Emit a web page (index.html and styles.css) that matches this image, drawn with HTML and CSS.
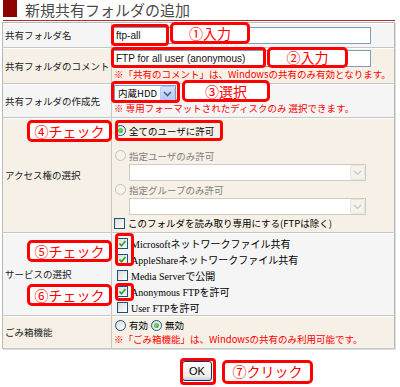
FILE: index.html
```html
<!DOCTYPE html>
<html lang="ja">
  <head>
    <meta charset="UTF-8" />
    <title>新規共有フォルダの追加</title>
    <link rel="stylesheet" href="styles.css">
  </head>
  <body>
    <div class="page">
      <!-- タイトル -->
      <div class="title">
        <span class="title-mark"></span>
        <h1>新規共有フォルダの追加</h1>
      </div>

      <table class="form">
        <tr class="row-name">
          <th>共有フォルダ名</th>
          <td><div class="text-box">ftp-all</div></td>
        </tr>
        <tr class="row-comment alt">
          <th>共有フォルダのコメント</th>
          <td>
            <div class="text-box">FTP for all user (anonymous)</div>
            <p class="note">※「共有のコメント」は、Windowsの共有のみ有効となります。</p>
          </td>
        </tr>
        <tr class="row-disk">
          <th>共有フォルダの作成先</th>
          <td>
            <div class="select small">
              <span class="select-text">内蔵HDD</span>
              <span class="drop"><svg viewBox="0 0 9 6" width="9" height="6"><path d="M1 1l3.5 3.5L8 1" fill="none" stroke="currentColor" stroke-width="1.6"/></svg></span>
            </div>
            <p class="note">※ 専用フォーマットされたディスクのみ 選択できます。</p>
          </td>
        </tr>
        <tr class="row-access alt">
          <th>アクセス権の選択</th>
          <td>
            <div class="opt first"><span class="radio on"></span>全てのユーザに許可</div>
            <div class="opt off"><span class="radio"></span>指定ユーザのみ許可</div>
            <div class="select wide off">
              <span class="select-text"></span>
              <span class="drop"><svg viewBox="0 0 9 6" width="9" height="6"><path d="M1 1l3.5 3.5L8 1" fill="none" stroke="currentColor" stroke-width="1.2"/></svg></span>
            </div>
            <div class="opt off"><span class="radio"></span>指定グループのみ許可</div>
            <div class="select wide off">
              <span class="select-text"></span>
              <span class="drop"><svg viewBox="0 0 9 6" width="9" height="6"><path d="M1 1l3.5 3.5L8 1" fill="none" stroke="currentColor" stroke-width="1.2"/></svg></span>
            </div>
            <div class="opt last"><span class="check"></span>このフォルダを読み取り専用にする(FTPは除く)</div>
          </td>
        </tr>
        <tr class="row-service">
          <th>サービスの選択</th>
          <td>
            <div class="svc"><span class="check"><svg viewBox="0 0 11 11" width="11" height="11"><path d="M2.5 5.5l2 2.2 4-4.7" fill="none" stroke="#21a121" stroke-width="1.6"/></svg></span>Microsoftネットワークファイル共有</div>
            <div class="svc"><span class="check"><svg viewBox="0 0 11 11" width="11" height="11"><path d="M2.5 5.5l2 2.2 4-4.7" fill="none" stroke="#21a121" stroke-width="1.6"/></svg></span>AppleShareネットワークファイル共有</div>
            <div class="svc"><span class="check"></span>Media Serverで公開</div>
            <div class="svc"><span class="check"><svg viewBox="0 0 11 11" width="11" height="11"><path d="M2.5 5.5l2 2.2 4-4.7" fill="none" stroke="#21a121" stroke-width="1.6"/></svg></span>Anonymous FTPを許可</div>
            <div class="svc"><span class="check"></span>User FTPを許可</div>
          </td>
        </tr>
        <tr class="row-trash alt">
          <th>ごみ箱機能</th>
          <td>
            <div class="opt trash"><span class="radio"></span>有効<span class="radio on"></span>無効</div>
            <p class="note">※「ごみ箱機能」は、Windowsの共有のみ利用可能です。</p>
          </td>
        </tr>
      </table>

      <div class="actions">
        <button class="ok">OK</button>
      </div>

      <!-- 操作説明の吹き出し -->
      <span class="mark mark-name"></span>
      <span class="mark mark-comment"></span>
      <span class="mark mark-disk"></span>
      <span class="mark mark-all"></span>
      <span class="mark mark-svc"></span>
      <span class="mark mark-ftp"></span>
      <span class="mark mark-ok"></span>

      <span class="tag tag-1">①入力</span>
      <span class="tag tag-2">②入力</span>
      <span class="tag tag-3">③選択</span>
      <span class="tag tag-4">④チェック</span>
      <span class="tag tag-5">⑤チェック</span>
      <span class="tag tag-6">⑥チェック</span>
      <span class="tag tag-7">⑦クリック</span>
    </div>
  </body>
</html>
```

FILE: styles.css
```css
body {
  margin: 0;
  background-color: #fff;
  font-family: "Noto Sans CJK JP", sans-serif;
  font-size: 9.5px;
  color: #222;
}

.page {
  position: relative;
  width: 400px;
  height: 387px;
  overflow: hidden;
}

.title {
  display: flex;
  align-items: flex-end;
  height: 20px;
  margin: 0 5px 0 3px;
  border-bottom: 1px solid #b22a2a;
}

.title-mark {
  width: 14px;
  height: 17px;
  margin-bottom: 3px;
  background-color: #8c0000;
}

.title h1 {
  margin: 0 0 1px 8px;
  font-size: 15px;
  font-weight: normal;
  line-height: 19px;
  color: #4a4a4a;
}

.form {
  margin: 1px 0 0 2px;
  width: 393px;
  border-collapse: collapse;
  border: 1px solid #b8b8b8;
  box-shadow: 1px 1px 0 #dcdcdc;
}

.form th,
.form td {
  box-sizing: border-box;
  padding: 0;
  border-bottom: 1px solid #c6c6c6;
  box-shadow: inset 0 1px 0 #fff;
  background-color: #f5f5f5;
}

.form tr.alt th,
.form tr.alt td {
  background-color: #f6f0e6;
}

.form th {
  width: 109px;
  padding-left: 2px;
  border-right: 1px solid #c6c6c6;
  text-align: left;
  font-weight: normal;
  vertical-align: middle;
}

.form td {
  vertical-align: top;
}

.row-name td { height: 25px; padding-top: 4px; }
.row-comment td { height: 36px; padding-top: 2px; }
.row-disk td { height: 34px; padding-top: 1px; }
.row-access td { height: 115px; padding-top: 4px; }
.row-service td { height: 83px; padding-top: 2px; }
.row-trash td { height: 33px; padding-top: 1px; }

.text-box {
  width: 259px;
  height: 17px;
  box-sizing: border-box;
  padding: 0 3px;
  border: 1px solid #7f9db9;
  background-color: #fff;
  font-family: "Liberation Sans", sans-serif;
  font-size: 10px;
  line-height: 15px;
  color: #111;
}

.note {
  margin: 0 0 0 2px;
  font-size: 9.5px;
  line-height: 13px;
  white-space: nowrap;
  color: #f00;
}

.row-comment .note {
  margin-top: 1px;
}

.select {
  display: flex;
  align-items: center;
  height: 17px;
  box-sizing: border-box;
  border: 1px solid #7f9db9;
  background-color: #fff;
}

.select.small {
  width: 62px;
  margin-left: 2px;
}

.select.wide {
  width: 237px;
  margin-left: 17px;
}

.select-text {
  flex: 1;
  padding-left: 3px;
  font-size: 9.5px;
  line-height: 15px;
  white-space: nowrap;
  color: #000;
}

.drop {
  display: flex;
  align-items: center;
  justify-content: center;
  width: 15px;
  height: 15px;
  box-sizing: border-box;
  border: 1px solid #b7cbf5;
  border-radius: 2px;
  background: linear-gradient(#d6e2fc, #b4c8f6);
  color: #4d6185;
}

.select.off {
  border-color: #cfcdc0;
}

.select.off .drop {
  border-color: #e8e6dc;
  background: #f4f3ee;
  color: #c9c7ba;
}

.opt {
  display: flex;
  align-items: center;
  height: 17px;
  padding-left: 3px;
  color: #000;
}

.opt.first {
  margin-bottom: 8px;
}

.opt.off {
  color: #7d7d7d;
}

.opt.last {
  height: 16px;
  padding-left: 2px;
}

.radio {
  position: relative;
  width: 11px;
  height: 11px;
  box-sizing: border-box;
  margin-right: 3px;
  border: 1px solid #1c5180;
  border-radius: 50%;
  background: linear-gradient(135deg, #dcdcd5, #fff);
}

.opt.off .radio {
  border-color: #c4c2b4;
  background: #f4f3ee;
}

.radio.on::after {
  content: "";
  position: absolute;
  left: 2px;
  top: 2px;
  width: 5px;
  height: 5px;
  border-radius: 50%;
  background: radial-gradient(circle at 40% 40%, #7be27b, #21a121);
}

.check {
  display: flex;
  width: 11px;
  height: 11px;
  box-sizing: border-box;
  margin-right: 3px;
  border: 1px solid #1c5180;
  background: linear-gradient(135deg, #dcdcd5, #fff);
}

.check svg {
  margin: -1px;
}

.svc {
  display: flex;
  align-items: center;
  height: 16px;
  padding-left: 5px;
  font-family: "Liberation Serif", "Noto Sans CJK JP", serif;
  font-size: 10px;
  color: #000;
}

.trash {
  height: 16px;
}

.trash .radio.on {
  margin-left: 3px;
}

.actions {
  display: flex;
  justify-content: center;
  padding: 12px 6px 0 0;
}

.ok {
  width: 30px;
  height: 20px;
  padding: 0;
  border: 1px solid #003c74;
  border-radius: 3px;
  background: linear-gradient(#fff, #ecebe6 80%, #d6d0c5);
  box-shadow: inset 0 -1px 0 #c4d6f3;
  font-family: "Liberation Sans", sans-serif;
  font-size: 11px;
  color: #000;
}

/* 赤枠の注釈 */
.mark {
  position: absolute;
  box-sizing: border-box;
  border: 3px solid #f00;
  border-radius: 4px;
}

.mark-name { left: 111px; top: 24px; width: 58px; height: 22px; }
.mark-comment { left: 111px; top: 47px; width: 155px; height: 21px; }
.mark-disk { left: 111px; top: 81px; width: 69px; height: 22px; }
.mark-all { left: 115px; top: 120px; width: 108px; height: 21px; }
.mark-svc { left: 115px; top: 233px; width: 19px; height: 33px; }
.mark-ftp { left: 115px; top: 283px; width: 19px; height: 18px; }
.mark-ok { left: 180px; top: 358px; width: 36px; height: 27px; }

.tag {
  position: absolute;
  box-sizing: border-box;
  height: 22px;
  border: 3px solid #f00;
  border-radius: 5px;
  background-color: #fff;
  font-size: 14px;
  line-height: 16px;
  text-align: center;
  color: #f00;
}

.tag-1 { left: 170px; top: 22px; width: 80px; }
.tag-2 { left: 267px; top: 47px; width: 81px; height: 21px; line-height: 15px; }
.tag-3 { left: 182px; top: 80px; width: 88px; }
.tag-4 { left: 27px; top: 120px; width: 85px; }
.tag-5 { left: 27px; top: 240px; width: 85px; }
.tag-6 { left: 27px; top: 284px; width: 85px; }
.tag-7 { left: 222px; top: 360px; width: 91px; height: 24px; }
```
